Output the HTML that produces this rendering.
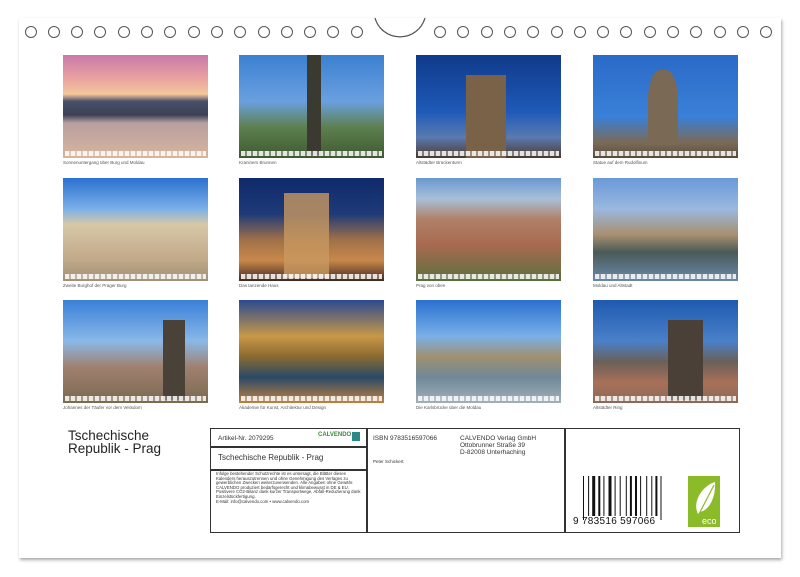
<!DOCTYPE html>
<html><head><meta charset="utf-8"><style>
*{margin:0;padding:0;box-sizing:border-box}
body{width:800px;height:577px;background:#fff;position:relative;overflow:hidden;font-family:"Liberation Sans",sans-serif}
.card{position:absolute;left:19px;top:18px;width:762px;height:540px;background:#fff;box-shadow:1px 2px 3px rgba(0,0,0,.35)}
.hole{position:absolute;width:12px;height:12px;border:1.3px solid #555;border-radius:50%;top:26px}
.ph{position:absolute;width:145px;height:103px;overflow:hidden}
.ph .strip{position:absolute;left:2px;right:2px;bottom:2px;height:5px;background:repeating-linear-gradient(90deg,rgba(255,255,255,.85) 0 4px,rgba(255,255,255,.3) 4px 6px)}
.cap{position:absolute;font-size:4.5px;color:#555}
.box{position:absolute;border:1.5px solid #333}
.t{position:absolute;color:#333}
</style></head><body>
<div class="card"></div>
<svg style="position:absolute;left:370px;top:14px" width="60" height="34"><path d="M5 4 A26 26 0 0 0 55 4" fill="#fff" stroke="#555" stroke-width="1.3"/></svg>
<div id="holes"></div>

<div class="ph" style="left:63px;top:55px;background:linear-gradient(180deg,#c87aa8 0%,#e8a0a0 22%,#f4c79a 38%,#4a5068 45%,#3a4055 58%,#b8a0a0 66%,#d8b49c 100%)"><div class="strip"></div></div>
<div class="ph" style="left:239px;top:55px;background:linear-gradient(180deg,#3b80d0 0%,#6aa0e0 45%,#5d8050 70%,#3f5a30 100%)"><div style="position:absolute;left:68px;top:0;width:14px;height:100px;background:#3a3a30"></div><div class="strip"></div></div>
<div class="ph" style="left:416px;top:55px;background:linear-gradient(180deg,#103a8a 0%,#1e5ab8 55%,#5a7ab0 80%,#4a3a28 100%)"><div style="position:absolute;left:50px;top:20px;width:40px;height:83px;background:#7a6248"></div><div class="strip"></div></div>
<div class="ph" style="left:593px;top:55px;background:linear-gradient(180deg,#2a6ac8 0%,#3a80d8 60%,#7a6a58 85%,#5a4a38 100%)"><div style="position:absolute;left:55px;top:15px;width:30px;height:75px;background:#7a6a55;border-radius:40% 40% 0 0"></div><div class="strip"></div></div>
<div class="cap" style="left:63px;top:160px">Sonnenuntergang über Burg und Moldau</div>
<div class="cap" style="left:239px;top:160px">Kraniners Brunnen</div>
<div class="cap" style="left:416px;top:160px">Altstädter Brückenturm</div>
<div class="cap" style="left:593px;top:160px">Statue auf dem Rudolfinum</div>

<div class="ph" style="left:63px;top:178px;background:linear-gradient(180deg,#2c70d0 0%,#7ab0e8 30%,#d8c8a8 45%,#c0a888 80%,#a09078 100%)"><div class="strip"></div></div>
<div class="ph" style="left:239px;top:178px;background:linear-gradient(180deg,#0e2a6a 0%,#203a78 35%,#a07048 60%,#c8884a 80%,#402820 100%)"><div style="position:absolute;left:45px;top:15px;width:45px;height:85px;background:#c89860;opacity:.8"></div><div class="strip"></div></div>
<div class="ph" style="left:416px;top:178px;background:linear-gradient(180deg,#6a98d0 0%,#a8c0d8 20%,#b08068 40%,#a86a50 65%,#5a7040 100%)"><div class="strip"></div></div>
<div class="ph" style="left:593px;top:178px;background:linear-gradient(180deg,#6a98d8 0%,#9ab8e0 30%,#a89070 55%,#4a5a58 72%,#6a88a8 100%)"><div class="strip"></div></div>
<div class="cap" style="left:63px;top:283px">Zweite Burghof der Prager Burg</div>
<div class="cap" style="left:239px;top:283px">Das tanzende Haus</div>
<div class="cap" style="left:416px;top:283px">Prag von oben</div>
<div class="cap" style="left:593px;top:283px">Moldau und Altstadt</div>

<div class="ph" style="left:63px;top:300px;background:linear-gradient(180deg,#3a80d8 0%,#8ab8e8 40%,#a08070 65%,#7a6a50 100%)"><div style="position:absolute;left:100px;top:20px;width:22px;height:80px;background:#4a4238"></div><div class="strip"></div></div>
<div class="ph" style="left:239px;top:300px;background:linear-gradient(180deg,#2a4a90 0%,#c89848 35%,#8a6a30 55%,#2a4a68 75%,#c08040 100%)"><div class="strip"></div></div>
<div class="ph" style="left:416px;top:300px;background:linear-gradient(180deg,#2a70d0 0%,#7ab0e8 35%,#a09070 55%,#708898 75%,#a0b0b8 100%)"><div class="strip"></div></div>
<div class="ph" style="left:593px;top:300px;background:linear-gradient(180deg,#1e5ab0 0%,#4a80c8 40%,#6a6058 60%,#a87058 80%,#8a6a58 100%)"><div style="position:absolute;left:75px;top:20px;width:35px;height:80px;background:#4a4038"></div><div class="strip"></div></div>
<div class="cap" style="left:63px;top:405px">Johannes der Täufer vor dem Veitsdom</div>
<div class="cap" style="left:239px;top:405px">Akademie für Kunst, Architektur und Design</div>
<div class="cap" style="left:416px;top:405px">Die Karlsbrücke über die Moldau</div>
<div class="cap" style="left:593px;top:405px">Altstädter Ring</div>

<div class="t" style="left:68px;top:429px;font-size:13.5px;line-height:13px;color:#222">Tschechische<br>Republik - Prag</div>

<div class="box" style="left:210px;top:428px;width:530px;height:105px"></div>
<div style="position:absolute;left:366px;top:428px;width:1.5px;height:105px;background:#333"></div>
<div style="position:absolute;left:564px;top:428px;width:1.5px;height:105px;background:#333"></div>
<div style="position:absolute;left:210px;top:446px;width:157px;height:1.5px;background:#333"></div>
<div style="position:absolute;left:210px;top:469px;width:157px;height:1.5px;background:#333"></div>
<div class="t" style="left:218px;top:435px;font-size:6.5px">Artikel-Nr. 2079295</div>
<div class="t" style="left:318px;top:432px;font-size:6px;color:#3a8a3a;font-weight:bold">CALVENDO</div>
<div style="position:absolute;left:352px;top:432px;width:8px;height:9px;background:#2a8a8a"></div>
<div class="t" style="left:218px;top:453px;font-size:8px">Tschechische Republik - Prag</div>
<div class="t" style="left:216px;top:472px;font-size:4.3px;line-height:4.6px;width:150px">Infolge bestehender Schutzrechte ist es untersagt, die Blätter dieses Kalenders herauszutrennen und ohne Genehmigung des Verlages zu gewerblichen Zwecken weiterzuverwenden. Alle Angaben ohne Gewähr.<br>CALVENDO produziert bedarfsgerecht und klimabewusst in DE &amp; EU.<br>Positivere CO2-Bilanz dank kurzer Transportwege, Abfall-Reduzierung dank Einzelstückfertigung.<br>E-Mail: info@calvendo.com • www.calvendo.com</div>
<div class="t" style="left:373px;top:435px;font-size:6.5px">ISBN 9783516597066</div>
<div class="t" style="left:373px;top:459px;font-size:4.5px">Peter Schickert</div>
<div class="t" style="left:460px;top:435px;font-size:6.5px;line-height:7px">CALVENDO Verlag GmbH<br>Ottobrunner Straße 39<br>D-82008 Unterhaching</div>

<svg style="position:absolute;left:580px;top:474px" width="90" height="56" id="bc"></svg>
<div class="t" style="left:573px;top:516px;font-size:10px;color:#111;letter-spacing:.3px">9 783516 597066</div>
<div style="position:absolute;left:688px;top:476px;width:32px;height:51px;background:#8cbb2a"></div>
<svg style="position:absolute;left:688px;top:476px" width="32" height="51"><path d="M10 38 C4 26 14 10 27 6 C28 20 22 34 12 36 Z" fill="#fff"/><path d="M10 40 L26 9" stroke="#8cbb2a" stroke-width="1.2"/><text x="14" y="48" font-size="9" fill="#fff" font-family="Liberation Sans">eco</text></svg>

<script>
var h='';for(var i=0;i<15;i++){h+='<div class="hole" style="left:'+(24.5+i*23.3)+'px"></div>';h+='<div class="hole" style="left:'+(434+i*23.3)+'px"></div>';}
document.getElementById('holes').innerHTML=h;
var b=document.getElementById('bc'),s='',x=3,w=[1,2,1,1,3,1,2,1,1,2,3,1,1,2,1,3,1,1,2,1,2,1,1,3,1,2,1,1,2,1,1,2];
for(var j=0;j<w.length;j++){if(j%2==0)s+='<rect x="'+x+'" y="2" width="'+w[j]+'" height="'+(j<2||j>w.length-3?44:40)+'" fill="#111"/>';x+=w[j]+1.05;}
b.innerHTML=s;
</script>
</body></html>
